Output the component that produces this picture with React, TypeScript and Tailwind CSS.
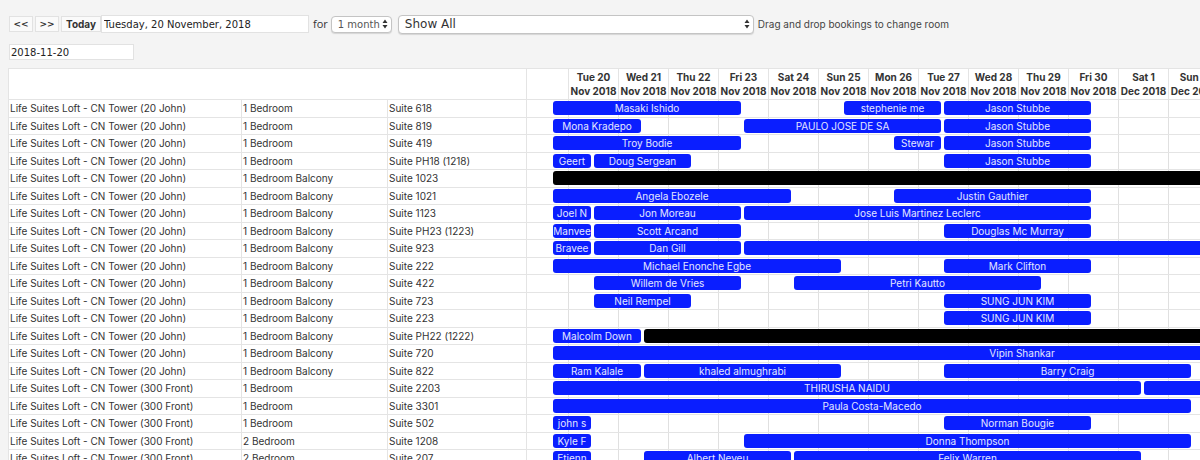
import { useState, type ReactNode, type SelectHTMLAttributes } from 'react';
import clsx from 'clsx';

// start/end count check-in boundaries: 0 is the left edge of the planner, 1 is noon on the first day
type Booking = { name: string; start: number; end: number; blocked?: boolean };
type Room = { building: string; type: string; suite: string; bookings: Booking[] };

const DAYS = 19;
const JOHN = 'Life Suites Loft - CN Tower (20 John)';
const FRONT = 'Life Suites Loft - CN Tower (300 Front)';
const ONE = '1 Bedroom';
const BALCONY = '1 Bedroom Balcony';
const TWO = '2 Bedroom';

const b = (name: string, start: number, end: number): Booking => ({ name, start, end });
const blocked = (start: number): Booking => ({ name: '', start, end: DAYS, blocked: true });
const room = (building: string, type: string, suite: string, ...bookings: Booking[]): Room => ({
  building,
  type,
  suite: `Suite ${suite}`,
  bookings,
});

const ROOMS: Room[] = [
  room(JOHN, ONE, '618', b('Masaki Ishido', 0, 4), b('stephenie me', 6, 8), b('Jason Stubbe', 8, 11)),
  room(JOHN, ONE, '819', b('Mona Kradepo', 0, 2), b('PAULO JOSE DE SA', 4, 8), b('Jason Stubbe', 8, 11)),
  room(JOHN, ONE, '419', b('Troy Bodie', 0, 4), b('Stewar', 7, 8), b('Jason Stubbe', 8, 11)),
  room(JOHN, ONE, 'PH18 (1218)', b('Geert', 0, 1), b('Doug Sergean', 1, 3), b('Jason Stubbe', 8, 11)),
  room(JOHN, BALCONY, '1023', blocked(0)),
  room(JOHN, BALCONY, '1021', b('Angela Ebozele', 0, 5), b('Justin Gauthier', 7, 11)),
  room(JOHN, BALCONY, '1123', b('Joel N', 0, 1), b('Jon Moreau', 1, 4), b('Jose Luis Martinez Leclerc', 4, 11)),
  room(JOHN, BALCONY, 'PH23 (1223)', b('Manvee', 0, 1), b('Scott Arcand', 1, 4), b('Douglas Mc Murray', 8, 11)),
  room(JOHN, BALCONY, '923', b('Bravee', 0, 1), b('Dan Gill', 1, 4), b('', 4, DAYS)),
  room(JOHN, BALCONY, '222', b('Michael Enonche Egbe', 0, 6), b('Mark Clifton', 8, 11)),
  room(JOHN, BALCONY, '422', b('Willem de Vries', 1, 4), b('Petri Kautto', 5, 10)),
  room(JOHN, BALCONY, '723', b('Neil Rempel', 1, 3), b('SUNG JUN KIM', 8, 11)),
  room(JOHN, BALCONY, '223', b('SUNG JUN KIM', 8, 11)),
  room(JOHN, BALCONY, 'PH22 (1222)', b('Malcolm Down', 0, 2), blocked(2)),
  room(JOHN, BALCONY, '720', b('Vipin Shankar', 0, 19)),
  room(JOHN, BALCONY, '822', b('Ram Kalale', 0, 2), b('khaled almughrabi', 2, 6), b('Barry Craig', 8, 13)),
  room(FRONT, ONE, '2203', b('THIRUSHA NAIDU', 0, 12), b('', 12, DAYS)),
  room(FRONT, ONE, '3301', b('Paula Costa-Macedo', 0, 13)),
  room(FRONT, ONE, '502', b('john s', 0, 1), b('Norman Bougie', 8, 11)),
  room(FRONT, TWO, '1208', b('Kyle F', 0, 1), b('Donna Thompson', 4, 13)),
  room(FRONT, TWO, '207', b('Etienn', 0, 1), b('Albert Neveu', 2, 5), b('Felix Warren', 5, 12)),
];

const WEEKDAYS = ['Sun', 'Mon', 'Tue', 'Wed', 'Thu', 'Fri', 'Sat'];
const MONTHS = ['Jan', 'Feb', 'Mar', 'Apr', 'May', 'Jun', 'Jul', 'Aug', 'Sep', 'Oct', 'Nov', 'Dec'];
const days = Array.from({ length: DAYS }, (_, i) => new Date(2018, 10, 20 + i));

function NavButton({ children, label, className }: { children: ReactNode; label?: string; className: string }) {
  return (
    <button
      type="button"
      aria-label={label}
      className={clsx(
        'h-4 border border-[#e2e2e2] bg-[#fafafa] text-center leading-[14px] font-bold text-[#333] hover:bg-white',
        className,
      )}
    >
      {children}
    </button>
  );
}

function Select({ className, wrapper, ...props }: SelectHTMLAttributes<HTMLSelectElement> & { wrapper: string }) {
  return (
    <div className={clsx('relative', wrapper)}>
      <select
        className={clsx(
          'block w-full appearance-none rounded-[4px] border border-[#c4c4c4] bg-white pl-1.5 shadow-[0_1px_1px_#d5d5d5]',
          className,
        )}
        {...props}
      />
      <svg viewBox="0 0 6 10" className="pointer-events-none absolute top-1/2 right-1 h-2.5 w-1.5 -translate-y-1/2" fill="#333">
        <path d="M3 0.5 5.5 4h-5zM3 9.5 0.5 6h5z" />
      </svg>
    </div>
  );
}

function BookingBar({ booking }: { booking: Booking }) {
  return (
    <div
      draggable
      style={{ gridColumn: `${booking.start + 2} / ${booking.end + 2}` }}
      className={clsx(
        'mr-px ml-0.5 h-3.5 cursor-move overflow-hidden rounded-[3px] text-center text-[10px] leading-[14px] text-[#e4e7ff]',
        booking.blocked ? 'bg-black' : 'bg-[#0a1eff]',
      )}
    >
      {booking.name}
    </div>
  );
}

export default function App() {
  const [longDate, setLongDate] = useState('Tuesday, 20 November, 2018');
  const [isoDate, setIsoDate] = useState('2018-11-20');

  return (
    <main className="h-screen overflow-hidden bg-[#f4f4f4] pl-2 font-['Inter',sans-serif] text-[#333]">
      <form className="pt-3.5 pl-px font-['DejaVu_Sans',sans-serif] text-[10px]">
        <div className="flex h-5 items-center">
          <div className="flex shrink-0 gap-0.5">
            <NavButton label="Previous" className="w-6 text-[9px]">&lt;&lt;</NavButton>
            <NavButton label="Next" className="w-6 text-[9px]">&gt;&gt;</NavButton>
            <NavButton className="w-10 font-['Inter',sans-serif] text-[10px]">Today</NavButton>
          </div>
          <input
            aria-label="Start date"
            value={longDate}
            onChange={(e) => setLongDate(e.target.value)}
            className="h-[18px] w-52 border border-[#e2e2e2] bg-white px-0.5 text-[10px] text-[#222]"
          />
          <label htmlFor="period" className="mr-[3px] ml-1 font-['Open_Sans',sans-serif] text-[11px]">for</label>
          <Select id="period" wrapper="w-[61px]" className="h-[17px] text-[10px] text-[#555]">
            <option>1 month</option>
            <option>2 months</option>
          </Select>
          <Select aria-label="Room filter" wrapper="ml-1.5 w-[356px]" className="h-[19px] text-xs text-[#333]">
            <option>Show All</option>
          </Select>
          <span className="ml-1 font-['Inter',sans-serif] text-[10px] whitespace-nowrap text-[#444]">
            Drag and drop bookings to change room
          </span>
        </div>
        <input
          aria-label="Date"
          value={isoDate}
          onChange={(e) => setIsoDate(e.target.value)}
          className="mt-2.5 block h-4 w-[125px] border border-[#e2e2e2] bg-white px-px text-[10px] text-[#222]"
        />
      </form>

      <div className="mt-2 overflow-hidden border-t border-l border-[#e4e4e4] bg-white">
        <table className="w-max border-separate border-spacing-0 text-[10px]">
          <thead>
            <tr className="h-[31px] leading-[14px]">
              <th colSpan={3} className="border-r border-b border-[#e4e4e4] p-0" />
              <th className="border-b border-[#e4e4e4] p-0">
                <div className="w-[41px]" />
              </th>
              {days.map((d) => (
                <th key={d.getTime()} className="border-b border-l border-[#e4e4e4] p-0 font-bold whitespace-nowrap">
                  <div className="w-[49px]">
                    {WEEKDAYS[d.getDay()]} {d.getDate()}
                    <br />
                    {MONTHS[d.getMonth()]} {d.getFullYear()}
                  </div>
                </th>
              ))}
            </tr>
          </thead>
          <tbody>
            {ROOMS.map((r) => (
              <tr key={r.building + r.suite} className="h-[17px] align-top leading-4 odd:h-[18px]">
                <td className="border-r border-b border-[#e4e4e4] p-0 pl-px">
                  <div className="w-[231px]">{r.building}</div>
                </td>
                <td className="border-r border-b border-[#e4e4e4] p-0 pl-px">
                  <div className="w-36">{r.type}</div>
                </td>
                <td className="border-r border-b border-[#e4e4e4] p-0 pl-px">
                  <div className="w-[137px]">{r.suite}</div>
                </td>
                <td
                  colSpan={DAYS + 1}
                  className="border-b border-[#e4e4e4] bg-[linear-gradient(to_right,#e0e0e0_1px,transparent_1px)] bg-[length:50px_100%] bg-[position:41px_0] p-0 pt-px"
                >
                  <div className="grid grid-cols-[24px_41px_repeat(18,50px)] pr-[26px]">
                    {r.bookings.map((booking) => (
                      <BookingBar key={booking.start} booking={booking} />
                    ))}
                  </div>
                </td>
              </tr>
            ))}
          </tbody>
        </table>
      </div>
    </main>
  );
}
